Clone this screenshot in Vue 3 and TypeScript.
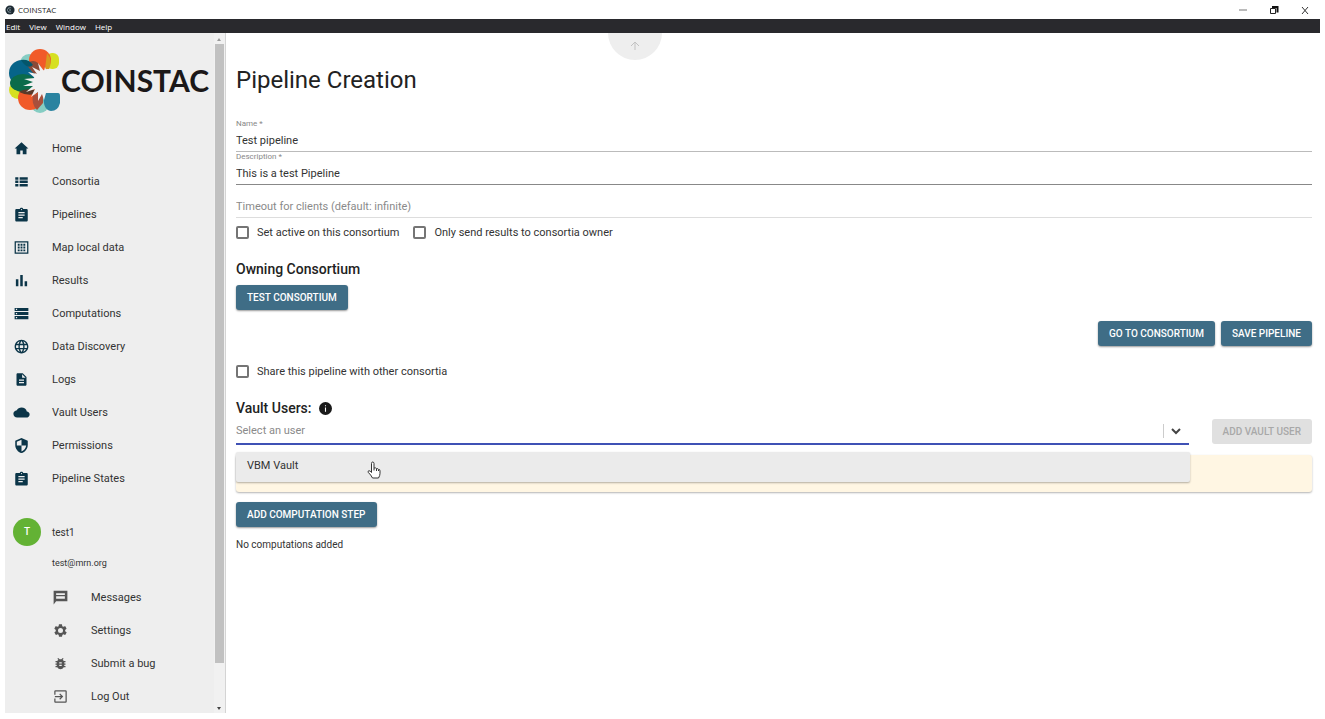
<script setup lang="ts">
import { ref } from 'vue'

interface NavItem {
  label: string
  icon: string
}

const navItems: NavItem[] = [
  { label: 'Home', icon: 'M10 21v-6h4v6h6v-9h3L12 2 1 12h3v9z' },
  { label: 'Consortia', icon: 'M2 5h5v4H2zM9 5h13v4H9zM2 10.500h5v4H2zM9 10.500h13v4H9zM2 16h5v4H2zM9 16h13v4H9z' },
  { label: 'Pipelines', icon: 'M20 3h-5.200C14.400 1.800 13.300 1 12 1s-2.400.8-2.800 2H4c-1.100 0-2 .9-2 2v16c0 1.100.9 2 2 2h16c1.100 0 2-.9 2-2V5c0-1.100-.9-2-2-2zm-8 0c.6 0 1 .4 1 1s-.4 1-1 1-1-.4-1-1 .4-1 1-1zm2 15H7v-2h7zm3-4H7v-2h10zm0-4H7V8h10z' },
  { label: 'Map local data', icon: 'M1 2v20h22V2zm20 18H3V4h18zM6 6h3v3H6zM10.500 6h3v3h-3zM15 6h3v3h-3zM6 10.500h3v3H6zM10.500 10.500h3v3h-3zM15 10.500h3v3h-3zM6 15h3v3H6zM10.500 15h3v3h-3zM15 15h3v3h-3z' },
  { label: 'Results', icon: 'M3 10h4v11H3zM10 3h4v18h-4zM17 13h4v8h-4z' },
  { label: 'Computations', icon: 'M1 3h22v5H1zm2 1.500v2h2v-2zM1 9.500h22v5H1zm2 1.500v2h2v-2zM1 16h22v5H1zm2 1.500v2h2v-2z' },
  { label: 'Data Discovery', icon: 'M11.990 1C5.900 1 1 5.900 1 12s4.900 11 10.990 11C18.100 23 23 18.100 23 12S18.100 1 11.990 1zm7.600 6.500h-3.200c-.4-1.400-.9-2.700-1.600-3.800 2 .7 3.700 2 4.800 3.800zM12 3.200c.9 1.300 1.600 2.700 2.100 4.300H9.900c.5-1.600 1.200-3 2.100-4.300zM3.500 14.200a9 9 0 0 1 0-4.400h3.700a18 18 0 0 0 0 4.400zm.9 2.300h3.200c.4 1.400.9 2.700 1.600 3.800-2-.7-3.700-2-4.800-3.800zm3.200-9H4.400c1.100-1.800 2.800-3.100 4.800-3.800-.7 1.100-1.200 2.400-1.600 3.800zM12 20.800c-.9-1.300-1.600-2.700-2.100-4.300h4.200c-.5 1.600-1.200 3-2.100 4.300zm2.600-6.600H9.400a16 16 0 0 1 0-4.400h5.200a16 16 0 0 1 0 4.400zm.2 6.100c.7-1.100 1.200-2.400 1.600-3.800h3.200a9 9 0 0 1-4.800 3.800zm2-6.100a18 18 0 0 0 0-4.400h3.700a9 9 0 0 1 0 4.400z' },
  { label: 'Logs', icon: 'M14 2H6c-1.100 0-2 .9-2 2v16c0 1.100.9 2 2 2h12c1.100 0 2-.9 2-2V8zm2 16H8v-2h8zm0-4H8v-2h8zm-3-5V3.500L18.500 9z' },
  { label: 'Vault Users', icon: 'M20.500 10.300C19.800 6.600 16.200 4 12 4 8.700 4 5.900 5.700 4.500 8.200 1.300 8.600-1 11 -1 14c0 3.300 2.800 6 6 6h14.500c3 0 5.500-2.200 5.500-5 0-2.600-2-4.600-4.500-4.700z' },
  { label: 'Permissions', icon: 'M12 0 2 4.500V11c0 6 4.300 11.500 10 13 5.700-1.500 10-7 10-13V4.500zm0 12h7.500c-.6 4.400-3.600 8.300-7.500 9.500V12H4.500V6L12 2.700z' },
  { label: 'Pipeline States', icon: 'M20 3h-5.200C14.400 1.800 13.300 1 12 1s-2.400.8-2.800 2H4c-1.100 0-2 .9-2 2v16c0 1.100.9 2 2 2h16c1.100 0 2-.9 2-2V5c0-1.100-.9-2-2-2zm-8 0c.6 0 1 .4 1 1s-.4 1-1 1-1-.4-1-1 .4-1 1-1zm2 15H7v-2h7zm3-4H7v-2h10zm0-4H7V8h10z' },
]

const accountItems: NavItem[] = [
  { label: 'Messages', icon: 'M1 1v22l4-5h18V1zm4 4h14v3H5zm0 5h14v4H5z' },
  { label: 'Settings', icon: 'M19.400 13c0-.3.1-.6.1-1s0-.7-.1-1l2.100-1.700c.2-.1.2-.4.1-.6l-2-3.500c-.1-.2-.4-.3-.6-.2l-2.500 1c-.5-.4-1.100-.7-1.700-1l-.4-2.600c0-.2-.2-.4-.5-.4h-4c-.2 0-.4.2-.5.4L9 5c-.6.3-1.200.6-1.700 1l-2.500-1c-.2-.1-.5 0-.6.2l-2 3.500c-.1.2-.1.5.1.6L4.500 11c0 .3-.1.700-.1 1s0 .7.1 1l-2.100 1.700c-.2.1-.2.4-.1.6l2 3.500c.1.2.4.3.6.2l2.500-1c.5.4 1.100.7 1.700 1l.4 2.600c0 .2.2.4.5.4h4c.2 0 .5-.2.500-.4L15 19c.6-.3 1.200-.6 1.700-1l2.500 1c.2.1.5 0 .6-.2l2-3.500c.1-.2.1-.5-.1-.6zM12 16a4 4 0 1 1 0-8 4 4 0 0 1 0 8z' },
  { label: 'Submit a bug', icon: 'M20 8h-2.800c-.5-.8-1.100-1.500-1.800-2L17 4.400 15.600 3l-2.200 2.200a6 6 0 0 0-2.800 0L8.400 3 7 4.400 8.600 6c-.7.500-1.300 1.200-1.800 2H4v2h2.100c-.1.300-.1.700-.1 1v1H4v2h2v1c0 .3 0 .7.100 1H4v2h2.800a6 6 0 0 0 10.400 0H20v-2h-2.100c.1-.3.1-.7.1-1v-1h2v-2h-2v-1c0-.3 0-.7-.1-1H20zm-6 8h-4v-2h4zm0-4h-4v-2h4z' },
  { label: 'Log Out', icon: 'M10 15.600 11.400 17l5-5-5-5L10 8.400l2.600 2.600H3v2h9.600zM20 2H4a2 2 0 0 0-2 2v5h2V4h16v16H4v-5H2v5c0 1.100.9 2 2 2h16a2 2 0 0 0 2-2V4a2 2 0 0 0-2-2z' },
]

const menus: string[] = ['Edit', 'View', 'Window', 'Help']
const name = ref('Test pipeline')
const description = ref('This is a test Pipeline')
const timeout = ref('')
const user = ref('')
const active = ref(false)
const ownerOnly = ref(false)
const shared = ref(false)
</script>

<template>
  <div class="window">
    <header class="titlebar">
      <svg class="app-icon" viewBox="0 0 12 12" aria-hidden="true">
        <circle cx="6" cy="6" r="5.500" fill="#1d2a33" />
        <path d="M7.500 3.500a3 3 0 1 0 0 5M4 4l3 2-3 2" fill="none" stroke="#7f939c" stroke-width="1" />
      </svg>
      <span class="app-name">COINSTAC</span>
      <div class="window-controls">
        <button type="button" aria-label="Minimize">
          <svg viewBox="0 0 10 10"><path d="M1 5h8" stroke="#777" /></svg>
        </button>
        <button type="button" aria-label="Restore">
          <svg viewBox="0 0 10 10"><path d="M1.500 3.500h5v5h-5z" fill="none" stroke="#222" /><path d="M3 2h5.500v5.500" fill="none" stroke="#111" stroke-width="2" /></svg>
        </button>
        <button type="button" aria-label="Close">
          <svg viewBox="0 0 10 10"><path d="M2 2l6 7M8 2L2 9" stroke="#333" /></svg>
        </button>
      </div>
    </header>

    <nav class="menubar" aria-label="Application menu">
      <button v-for="menu in menus" :key="menu" type="button">{{ menu }}</button>
    </nav>

    <div class="body">
      <aside class="sidebar">
        <div class="sidebar-content">
          <div class="logo">
            <svg viewBox="0 0 52 64" aria-hidden="true">
              <ellipse cx="20" cy="14" rx="9" ry="9" fill="#85cdc3" />
              <rect x="37" y="4" width="13" height="16" rx="6" fill="#d6e021" />
              <circle cx="9" cy="41" r="9" fill="#d6e021" />
              <circle cx="31" cy="55" r="9" fill="#85cdc3" />
              <circle cx="31" cy="11" r="11" fill="#f15a29" />
              <path d="M38 4q6 7 2 16h-4z" fill="#d99b1e" />
              <circle cx="13" cy="24" r="13" fill="#066489" />
              <path d="M20 13q8-4 13 7v6l-9-2-7-9z" fill="#8a4a38" />
              <path d="M12 11q8-1 12 5-6 5-12-5z" fill="#04566b" />
              <circle cx="21" cy="49" r="12" fill="#f15a29" />
              <ellipse cx="14" cy="34" rx="13" ry="9" fill="#0b6b4a" />
              <path d="M10 43q6-4 17-2l2 3q-9 4-19-1z" fill="#5a3a2a" />
              <path d="M24 46l10-2v10l-6 7q-6-6-4-15z" fill="#a8503c" />
              <path d="M35 44h14q2 0 2 3v7q-2 8-9 8-9-1-7-18z" fill="#2a83a0" />
              <path d="M52 20H40l-2 3-2-5-1 4-6-8 2 8-8-4 5 7-9-2 7 6-11 1 9 3-10 4 10 0-7 6 9-3-4 8 7-5 0 9 4-7 2 6 2-7h15z" fill="#f0f0f0" />
            </svg>
            <span class="wordmark">COINSTAC</span>
          </div>

          <nav class="nav" aria-label="Main">
            <a v-for="item in navItems" :key="item.label" href="#" class="nav-item">
              <svg viewBox="0 0 24 24" aria-hidden="true"><path :d="item.icon" fill-rule="evenodd" /></svg>
              <span>{{ item.label }}</span>
            </a>
          </nav>

          <div class="account">
            <div class="avatar">T</div>
            <span class="user-name">test1</span>
          </div>
          <div class="email">test@mrn.org</div>

          <nav class="nav account-nav" aria-label="Account">
            <a v-for="item in accountItems" :key="item.label" href="#" class="nav-item">
              <svg viewBox="0 0 24 24" aria-hidden="true"><path :d="item.icon" fill-rule="evenodd" /></svg>
              <span>{{ item.label }}</span>
            </a>
          </nav>
        </div>
        <div class="scrollbar" aria-hidden="true">
          <svg viewBox="0 0 10 10"><path d="M5 4l2 3H3z" fill="#999" /></svg>
          <div class="thumb"></div>
          <svg class="arrow-down" viewBox="0 0 10 10"><path d="M3 4h4L5 7z" fill="#444" /></svg>
        </div>
      </aside>

      <main class="main">
        <h1>Pipeline Creation</h1>

        <form @submit.prevent>
          <div class="field">
            <label for="name">Name *</label>
            <input id="name" v-model="name" type="text" />
          </div>
          <div class="field field-hover">
            <label for="description">Description *</label>
            <input id="description" v-model="description" type="text" />
          </div>
          <div class="field field-light">
            <input v-model="timeout" type="text" aria-label="Timeout for clients" placeholder="Timeout for clients (default: infinite)" />
          </div>

          <div class="checks">
            <label class="check"><input v-model="active" type="checkbox" />Set active on this consortium</label>
            <label class="check"><input v-model="ownerOnly" type="checkbox" />Only send results to consortia owner</label>
          </div>

          <h2>Owning Consortium</h2>
          <button type="button" class="btn">TEST CONSORTIUM</button>

          <div class="actions">
            <button type="button" class="btn">GO TO CONSORTIUM</button>
            <button type="submit" class="btn">SAVE PIPELINE</button>
          </div>

          <label class="check share"><input v-model="shared" type="checkbox" />Share this pipeline with other consortia</label>

          <h2 class="vault-title">
            Vault Users:
            <svg viewBox="0 0 24 24" aria-hidden="true"><circle cx="12" cy="12" r="12" fill="#1a1a1a" /><path d="M11 6h2v2h-2zM11 10h2v8h-2z" fill="#fff" /></svg>
          </h2>
          <div class="vault-row">
            <div class="combo">
              <input v-model="user" type="text" role="combobox" aria-expanded="true" aria-controls="vault-options" aria-label="Select an user" placeholder="Select an user" />
              <button type="button" class="toggle" aria-label="Toggle options">
                <svg viewBox="0 0 10 10"><path d="M1 3l4 4 4-4" fill="none" stroke="#444" stroke-width="2" /></svg>
              </button>
              <div id="vault-options" class="options" role="listbox">
                <div class="option" role="option" aria-selected="false">VBM Vault</div>
                <svg class="pointer" viewBox="0 0 14 18" aria-hidden="true">
                  <path d="M4.500 10V2.500q0-1.500 1.200-1.500T7 2.500V7q2-.5 2.500.7 1.600-.4 2 .7 1.500-.2 1.500 1.400v2.700q0 2-1.500 4.500H5.500Q4 14 1.200 11.300q-.6-1.300.8-1.600 1.200 0 2.500 1.800zM7 7v2.500M9.500 7.700V10M11.500 8.500V10" fill="#fff" stroke="#333" stroke-width="1" stroke-linejoin="round" />
                </svg>
              </div>
            </div>
            <button type="button" class="btn" disabled>ADD VAULT USER</button>
          </div>
          <div class="notice"></div>

          <button type="button" class="btn">ADD COMPUTATION STEP</button>
          <p class="empty">No computations added</p>
        </form>
      </main>

      <button type="button" class="scroll-top" aria-label="Scroll to top">
        <svg viewBox="0 0 12 12"><path d="M2 6l4-4 4 4M6 3v7" fill="none" stroke="#c2c2c2" stroke-width="1" /></svg>
      </button>
    </div>
  </div>
</template>

<style>
body {
  margin: 0;
  background: #fff;
}
</style>

<style scoped>
.window,
.window * {
  box-sizing: border-box;
}
.window {
  display: flex;
  flex-direction: column;
  min-height: 100vh;
  padding: 0 5px 6px;
  font-family: Roboto, "Liberation Sans", sans-serif;
  font-size: 11px;
  color: #333;
}
button,
input {
  font: inherit;
  color: inherit;
}
button {
  border: 0;
  padding: 0;
  background: none;
}
svg {
  display: block;
}
.titlebar {
  display: flex;
  align-items: center;
  height: 19px;
  gap: 3px;
}
.app-icon {
  width: 10px;
  height: 12px;
}
.app-name {
  font: 8px/18px "Open Sans", sans-serif;
  color: #222;
}
.window-controls {
  display: flex;
  gap: 21px;
  margin-left: auto;
  padding-right: 10px;
}
.window-controls svg {
  width: 10px;
  height: 10px;
}
.menubar {
  display: flex;
  gap: 9px;
  height: 14px;
  padding: 0 1px;
  background: #29292d;
  color: #fff;
  font: 8px/13px "Open Sans", sans-serif;
}
.body {
  position: relative;
  display: flex;
  flex: 1;
  overflow: hidden;
}
.sidebar {
  display: flex;
  flex: none;
  width: 221px;
  border-right: 1px solid #d4d4d4;
  background: #eee;
}
.sidebar-content {
  flex: 1;
}
.scrollbar {
  display: flex;
  flex-direction: column;
  width: 11px;
  padding: 1px 1px 0 0;
  background: #f1f1f1;
}
.scrollbar svg {
  width: 10px;
  height: 10px;
}
.thumb {
  height: 619px;
  margin-left: 1px;
  background: #c1c1c1;
}
.scrollbar .arrow-down {
  margin-top: auto;
}
.logo {
  display: flex;
  align-items: center;
  height: 96px;
  margin-bottom: 3px;
  padding-left: 4px;
}
.logo svg {
  flex: none;
  width: 52px;
  height: 64px;
}
.wordmark {
  padding-bottom: 2px;
  font: 700 30px/36px Lato, sans-serif;
  color: #1b1818;
}
.nav-item {
  display: flex;
  align-items: center;
  gap: 23px;
  height: 33px;
  padding-left: 9px;
  color: #333;
  text-decoration: none;
}
.nav-item svg {
  width: 15px;
  height: 15px;
  overflow: visible;
  fill: #0b3548;
}
.account {
  display: flex;
  align-items: center;
  gap: 11px;
  height: 28px;
  margin-top: 23px;
  padding-left: 8px;
}
.avatar {
  width: 28px;
  height: 28px;
  border-radius: 50%;
  background: #63b234;
  color: #fff;
  font-size: 10px;
  font-weight: 500;
  line-height: 28px;
  text-align: center;
}
.user-name {
  font-size: 10px;
}
.email {
  padding-left: 47px;
  font-size: 9px;
  line-height: 35px;
}
.account-nav .nav-item {
  padding-left: 48px;
}
.account-nav svg {
  fill: #555;
}
.main {
  flex: 1;
  min-width: 0;
  padding: 31px 8px 0 10px;
}
h1 {
  margin: 0 0 23px;
  font-size: 24px;
  font-weight: 400;
  line-height: 32px;
  color: #222;
}
.field {
  display: flex;
  flex-direction: column;
  justify-content: flex-end;
  height: 33px;
  border-bottom: 1px solid #bbb;
}
.field label {
  font-size: 8px;
  line-height: 10px;
  color: #888;
}
.field input {
  width: 100%;
  height: 22px;
  padding: 0;
  border: 0;
  outline: 0;
  background: none;
  color: #333;
}
.field-hover {
  border-color: #888;
}
.field-light {
  border-color: #ddd;
}
input::placeholder {
  color: #8a8a8a;
  opacity: 1;
}
.checks {
  display: flex;
  gap: 14px;
  height: 28px;
}
.check {
  display: flex;
  align-items: center;
  gap: 8px;
}
.check input {
  width: 13px;
  height: 13px;
  margin: 0;
  appearance: none;
  border: 2px solid #757575;
  border-radius: 2px;
}
h2 {
  margin: 13px 0 6px;
  font-size: 14px;
  font-weight: 500;
  line-height: 20px;
  color: #222;
}
.btn {
  display: block;
  height: 25px;
  padding: 0 11px;
  border-radius: 3px;
  background: #3f6d86;
  box-shadow: 0 1px 2px rgba(0, 0, 0, 0.4);
  color: #fff;
  font-size: 10px;
  font-weight: 500;
  white-space: nowrap;
}
.btn:disabled {
  background: #e0e0e0;
  box-shadow: none;
  color: #a8a8a8;
}
.actions {
  display: flex;
  justify-content: flex-end;
  gap: 6px;
  margin: 11px 0 15px;
}
.share {
  height: 20px;
}
.vault-title {
  display: flex;
  align-items: center;
  gap: 8px;
  margin: 17px 0 0;
}
.vault-title svg {
  width: 13px;
  height: 13px;
}
.vault-row {
  display: flex;
  align-items: center;
  gap: 23px;
}
.combo {
  position: relative;
  display: flex;
  flex: 1;
  align-items: center;
  height: 27px;
  border-bottom: 2px solid #3f51b5;
}
.combo input {
  flex: 1;
  padding: 0;
  border: 0;
  outline: 0;
  background: none;
}
.toggle {
  display: flex;
  align-items: center;
  justify-content: center;
  width: 26px;
  height: 14px;
  border-left: 1px solid #ccc;
}
.toggle svg {
  width: 10px;
  height: 10px;
}
.options {
  position: absolute;
  z-index: 1;
  top: 34px;
  left: 0;
  right: -1px;
  border-radius: 2px;
  background: #ebebeb;
  box-shadow: 0 1px 2px rgba(0, 0, 0, 0.3);
}
.option {
  height: 30px;
  padding: 0 11px;
  line-height: 28px;
}
.pointer {
  position: absolute;
  top: 9px;
  left: 131px;
  width: 14px;
  height: 18px;
}
.notice {
  height: 37px;
  margin: 10px 0;
  border-radius: 3px;
  background: #fff6e3;
  box-shadow: 0 1px 2px rgba(0, 0, 0, 0.3);
}
.empty {
  margin: 10px 0 0;
  font-size: 10px;
  line-height: 16px;
}
.scroll-top {
  position: absolute;
  top: -27px;
  left: calc(50% - 55px);
  width: 54px;
  height: 54px;
  border-radius: 50%;
  background: #eee;
}
.scroll-top svg {
  width: 12px;
  height: 12px;
  margin: 26px auto 0;
}
</style>
